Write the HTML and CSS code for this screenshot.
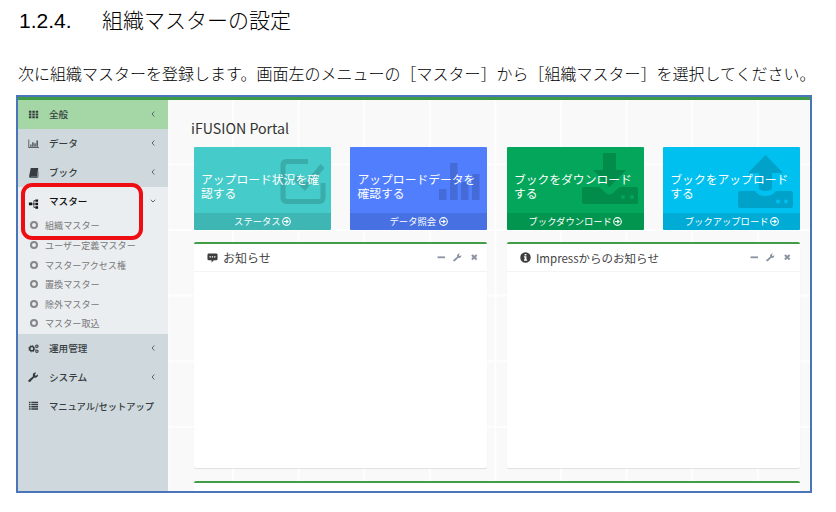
FILE: index.html
```html
<!DOCTYPE html>
<html lang="ja">
<head>
<meta charset="utf-8">
<title>組織マスターの設定</title>
<link rel="stylesheet" href="styles.css">
</head>
<body>
<svg width="0" height="0" class="defs">
  <defs>
    <symbol id="wrench" viewBox="0 0 16 16"><path d="M1 12.6 8 6.6A4.2 4.2 0 0 1 13.2 1L11 3.4l.6 2 2 .3L15.6 3.500A4.200 4.200 0 0 1 10 8.800L3.600 15.400A1.900 1.900 0 0 1 1 12.600Z"/></symbol>
    <symbol id="go" viewBox="0 0 16 16"><circle class="line" cx="8" cy="8" r="6.800" stroke-width="2"/><path d="M3.500 7H7.500V4L12.400 8 7.500 12V9H3.500Z"/></symbol>
    <symbol id="left" viewBox="0 0 6 8"><path class="line" d="M4.300 1.500 2 4 4.300 6.500" stroke-width="1"/></symbol>
  </defs>
</svg>
<h1><span class="num">1.2.4.</span><span>組織マスターの設定</span></h1>
<p class="lead">次に組織マスターを登録します。画面左のメニューの［マスター］から［組織マスター］を選択してください。</p>
<div class="frame">
  <div class="topbar"></div>
  <div class="body">
    <nav class="side">
      <div class="item on"><svg class="ic" viewBox="0 0 12 12"><path d="M1 2h2.700v2.200H1zM4.700 2h2.700v2.200H4.700zM8.400 2h2.700v2.200H8.400zM1 5h2.700v2.200H1zM4.700 5h2.700v2.200H4.700zM8.400 5h2.700v2.200H8.400zM1 8h2.700v2.200H1zM4.700 8h2.700v2.200H4.700zM8.400 8h2.700v2.200H8.400z"/></svg><b>全般</b><svg class="arr"><use href="#left"/></svg></div>
      <div class="item"><svg class="ic" viewBox="0 0 12 12"><path d="M.500 1.500h.8v8.700H12v.8H.500zM2.500 7h1.300v2.500H2.500zM4.700 4.500H6v5H4.700zM7 5.800h1.300v3.700H7zM9.300 2.800h1.400v6.700H9.300z"/></svg><b>データ</b><svg class="arr"><use href="#left"/></svg></div>
      <div class="item"><svg class="ic" viewBox="0 0 12 12"><path d="M3 1h8.200L9.800 10.500H3.200q-.8 0-.4.500h7.500L11.300 3v7.500q-.3 1.200-1.200 1.200H2.800Q1 11.700 1.200 10Z"/></svg><b>ブック</b><svg class="arr"><use href="#left"/></svg></div>
      <div class="group">
        <div class="item"><svg class="ic tree" viewBox="0 0 12 12"><path d="M1 5h3.500v3H1zM8 1.500h3v2.700H8zM8 5.200h3v2.700H8zM8 9h3v2.700H8z"/><path class="line" d="M4 6.500h4M8 2.900H6.400v7.400H8" stroke-width=".8"/></svg><b>マスター</b><svg class="arr" viewBox="0 0 6 8"><path class="line" d="M.700 2.800 3 5 5.300 2.800"/></svg></div>
        <ul>
          <li>組織マスター</li><li>ユーザー定義マスター</li><li>マスターアクセス権</li><li>置換マスター</li><li>除外マスター</li><li>マスター取込</li>
        </ul>
      </div>
      <div class="item"><svg class="ic" viewBox="0 0 12 12"><g class="line"><circle cx="4.200" cy="6.200" r="2.300" stroke-width="1.700"/><circle cx="4.200" cy="6.200" r="3.500" stroke-width=".9" stroke-dasharray="1.400 1.350"/><circle cx="9.700" cy="3.500" r="1.300" stroke-width="1.200"/><circle cx="9.700" cy="9" r="1.300" stroke-width="1.200"/></g></svg><b>運用管理</b><svg class="arr"><use href="#left"/></svg></div>
      <div class="item"><svg class="ic wr"><use href="#wrench"/></svg><b>システム</b><svg class="arr"><use href="#left"/></svg></div>
      <div class="item long"><svg class="ic" viewBox="0 0 12 12"><path d="M1 1.800h1.800v1.500H1zM3.600 1.800H11v1.500H3.600zM1 4.200h1.800v1.500H1zM3.600 4.200H11v1.500H3.600zM1 6.600h1.800v1.500H1zM3.600 6.600H11v1.500H3.600zM1 9h1.800v1.500H1zM3.600 9H11v1.500H3.600z"/></svg><b>マニュアル/セットアップ</b></div>
    </nav>
    <main>
      <h2>iFUSION Portal</h2>
      <div class="cards">
        <section class="card teal"><svg class="art" viewBox="0 0 60 60"><path class="line" d="M35 14.500H14q-4 0-4 4v32q0 4 4 4h32q4 0 4-4V36" stroke-width="5"/><path d="m20 32 4-4 8 8 15.500-19 4 4L32 44Z"/></svg><p>アップロード状況を確<br>認する</p><footer>ステータス<svg><use href="#go"/></svg></footer></section>
        <section class="card blue"><svg class="art" viewBox="0 0 60 60"><path d="M10 42h7.500v11H10zM21 16h7.500v37H21zM32 35h7.500v18H32zM43 27h7.500v26H43z"/></svg><p>アップロードデータを<br>確認する</p><footer>データ照会<svg class="gap"><use href="#go"/></svg></footer></section>
        <section class="card green"><svg class="art" viewBox="0 0 60 60"><path d="M17 6h13v17h10L23.500 40 7 23h10z"/><path fill-rule="evenodd" d="M-2 40h15l7 6q3.500 3 7 0l7-6h16q2 0 2 2v13q0 2-2 2H-2q-2 0-2-2V42q0-2 2-2Zm37 10a2 2 0 1 0 4 0a2 2 0 1 0-4 0Zm9 0a2 2 0 1 0 4 0a2 2 0 1 0-4 0Z"/></svg><p>ブックをダウンロード<br>する</p><footer>ブックダウンロード<svg><use href="#go"/></svg></footer></section>
        <section class="card cyan"><svg class="art" viewBox="0 0 60 60"><path d="M23.500 8 41 26H30v16q-6.500 4-13 0V26H6Z"/><path fill-rule="evenodd" d="M-2 44h15q3 5 10.500 5T34 44h15q2 0 2 2v13q0 2-2 2H-2q-2 0-2-2V46q0-2 2-2Zm36 10.500a2 2 0 1 0 4 0a2 2 0 1 0-4 0Zm8 0a2 2 0 1 0 4 0a2 2 0 1 0-4 0Z"/></svg><p>ブックをアップロード<br>する</p><footer>ブックアップロード<svg><use href="#go"/></svg></footer></section>
      </div>
      <div class="panels">
        <section class="panel"><header><svg class="hi" viewBox="0 0 12 12"><path fill-rule="evenodd" d="M2 1.500h8q1.500 0 1.500 1.500v4.500Q11.500 9 10 9H7.500L5 11.500V9H2Q.500 9 .500 7.500V3Q.500 1.500 2 1.500ZM2.700 4.500v1.500h1.500V4.500Zm2.500 0v1.500h1.500V4.500Zm2.500 0v1.500h1.500V4.500Z"/></svg><h3>お知らせ</h3><span class="tools"><svg viewBox="0 0 8 8"><path d="M.5 3.200h7v1.700h-7z"/></svg><svg><use href="#wrench"/></svg><svg viewBox="0 0 8 8"><path d="m1.800 1.800 4.400 4.400m0-4.400L1.800 6.200" stroke="currentColor" stroke-width="1.900"/></svg></span></header></section>
        <section class="panel"><header><svg class="hi" viewBox="0 0 12 12"><path fill-rule="evenodd" d="M6 .3a5.700 5.700 0 1 0 0 11.400A5.700 5.700 0 0 0 6 .3ZM5 2.200h2v1.500H5ZM4.300 4.700H7v3.600h.8v1.200H4.300V8.300H5V5.800h-.7Z"/></svg><h3 class="mixed">Impressからのお知らせ</h3><span class="tools"><svg viewBox="0 0 8 8"><path d="M.5 3.200h7v1.700h-7z"/></svg><svg><use href="#wrench"/></svg><svg viewBox="0 0 8 8"><path d="m1.800 1.800 4.400 4.400m0-4.400L1.800 6.200" stroke="currentColor" stroke-width="1.900"/></svg></span></header></section>
      </div>
      <section class="panel last"></section>
    </main>
  </div>
  <div class="mark"></div>
</div>
</body>
</html>
```

FILE: styles.css
```css
*, *::before { box-sizing: border-box; margin: 0; padding: 0; }
body { width: 836px; height: 512px; overflow: hidden; background: #fff; color: #000; font-family: "Noto Sans CJK JP", sans-serif; }
svg { fill: currentColor; flex: none; display: block; }
.line { fill: none; stroke: currentColor; }
.defs { position: absolute; }
h1 { height: 40px; padding-left: 19px; display: flex; font-size: 21px; font-weight: 300; line-height: 38px; }
.num { width: 83px; font-family: "Liberation Sans", sans-serif; font-weight: 400; line-height: 42px; }
.lead { height: 55px; padding: 21px 0 0 18px; font-size: 16px; font-weight: 300; line-height: 24px; white-space: nowrap; }
.frame { position: relative; width: 796px; height: 398px; margin-left: 16px; border: 2px solid #4a76b9; background: #fafafa; }
.topbar { height: 3px; background: #3d9a46; }
.body { display: flex; height: 391px; overflow: hidden; }
.side { width: 150px; background: #cfd8dd; color: #363d40; }
.item { display: flex; align-items: center; height: 28.9px; padding: 0 12px 0 10px; font-size: 9.6px; line-height: 14px; white-space: nowrap; }
.item.long { font-size: 9.250px; }
.item.on { background: #a5d6a5; }
.item b { flex: 1; font-weight: 500; margin-left: 10px; }
.ic { width: 11px; height: 11px; }
.wr { width: 10px; height: 10px; margin-right: 1px; }
.tree { color: #111; position: relative; top: 2px; }
.arr { width: 6px; height: 8px; color: #59666b; }
.group { background: #eaeef1; height: 147px; color: #111; }
ul { list-style: none; }
li { display: flex; align-items: center; height: 19.6px; padding-left: 12px; font-size: 9.1px; line-height: 14px; color: #777; }
li::before { content: ""; width: 8px; height: 8px; margin-right: 7px; border: 2px solid #858789; border-radius: 50%; }
main { flex: 1; padding: 18px 10px 0 26px; background-color: #f9f9f9; background-image: linear-gradient(90deg, #fefefe 1.500px, transparent 1.500px), linear-gradient(#fefefe 1.500px, transparent 1.500px); background-size: 65.600px 65.600px; background-position: 64px 63.500px; }
h2 { height: 29px; margin-left: -3px; font-size: 14.200px; font-weight: 400; line-height: 21px; color: #333; }
.cards { display: grid; grid-template-columns: repeat(4, 136.700px); justify-content: space-between; }
.card { position: relative; height: 82.500px; border-radius: 1px; color: #fff; overflow: hidden; display: flex; flex-direction: column; justify-content: space-between; }
.card p { position: relative; padding: 25px 0 0 7px; font-size: 11.800px; line-height: 13.500px; white-space: nowrap; font-weight: 400; }
.card footer { display: flex; align-items: center; justify-content: center; height: 17px; background: rgba(0,0,0,.1); font-size: 9.300px; line-height: 17px; font-weight: 400; }
.card footer svg { width: 9px; height: 9px; margin-left: 1px; }
.card footer .gap { margin-left: 3px; }
.art { position: absolute; left: 79px; top: 0; width: 60px; height: 60px; overflow: visible; opacity: .15; color: #000; }
.teal { background: #45cbc9; }
.blue { background: #507efd; }
.green { background: #03a65a; }
.cyan { background: #00c0ef; }
.panels { display: grid; grid-template-columns: 293px 293px; justify-content: space-between; margin-top: 12.500px; }
.panel { height: 226px; border-top: 2px solid #439c46; border-radius: 2px; background: #fff; box-shadow: 0 1px 1px rgba(0,0,0,.1); }
.panel header { display: flex; align-items: center; height: 28px; padding: 0 9px 0 13px; border-bottom: 1px solid #f4f4f4; color: #3d3d3d; }
.hi { width: 11px; height: 11px; margin-right: 5px; }
h3 { flex: 1; font-size: 12px; line-height: 20px; font-weight: 400; color: #444; }
h3.mixed { font-size: 11.500px; }
.tools { display: flex; gap: 8px; color: #8c93a3; }
.tools svg { width: 8.500px; height: 8.500px; }
.last { height: 30px; margin-top: 13px; }
.mark { position: absolute; left: 3px; top: 86px; width: 122px; height: 57px; border: 4px solid #ee0d12; border-radius: 11px; }
```
